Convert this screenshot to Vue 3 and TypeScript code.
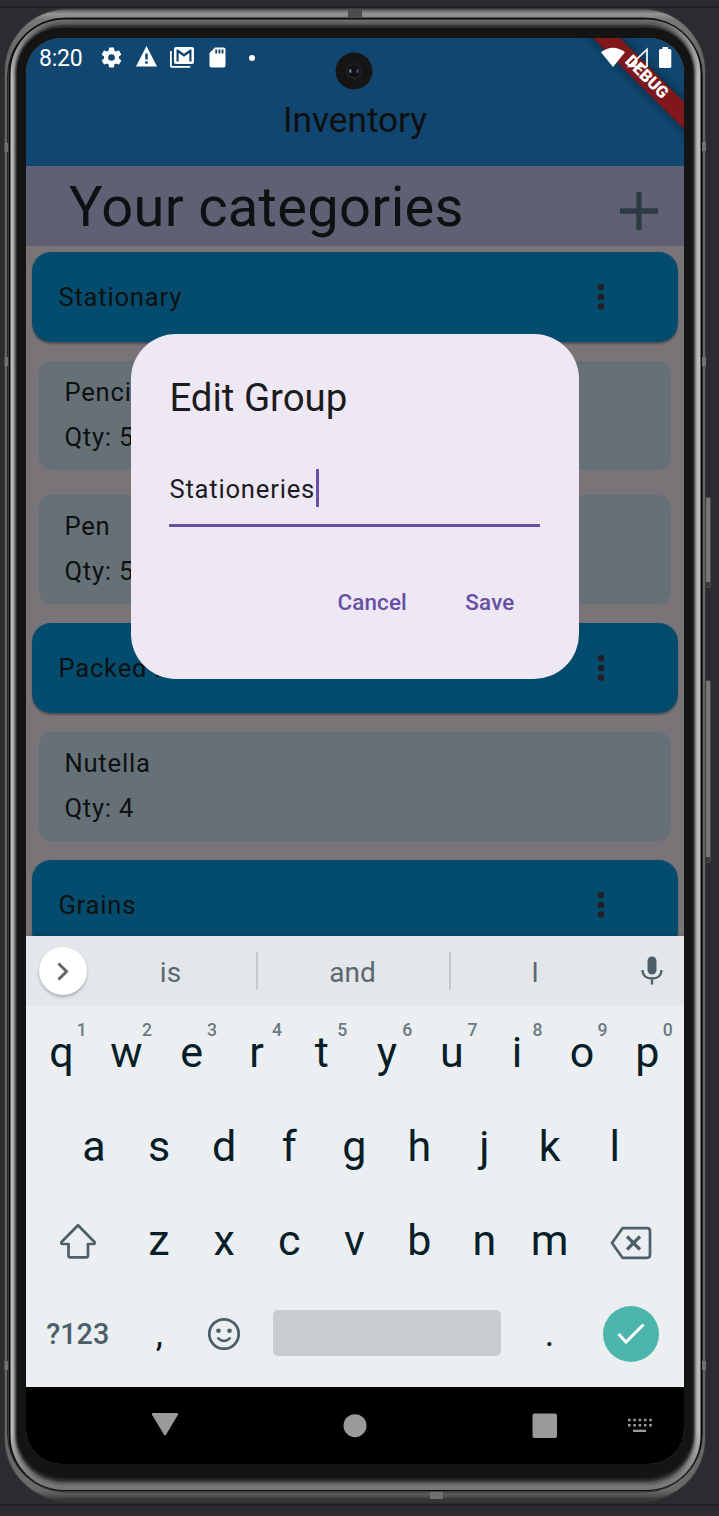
<script setup lang="ts">
interface Item { name: string; qty: number }
interface Group { name: string; items: Item[] }

const groups: Group[] = [
  { name: 'Stationary', items: [{ name: 'Pencil', qty: 5 }, { name: 'Pen', qty: 5 }] },
  { name: 'Packed Foods', items: [{ name: 'Nutella', qty: 4 }] },
  { name: 'Grains', items: [] },
]

const topRow = 'qwertyuiop'.split('').map((key, i) => ({ key, hint: (i + 1) % 10 }))
const homeRow = 'asdfghjkl'.split('')
const bottomRow = 'zxcvbnm'.split('')
</script>

<template>
  <div class="stage">
    <svg class="frame" width="719" height="1516" viewBox="0 0 719 1516">
      <defs>
        <linearGradient id="shell" x1="0" y1="0" x2="0" y2="1">
          <stop offset="0" stop-color="#5a5a5a" />
          <stop offset="0.003" stop-color="#969696" />
          <stop offset="0.007" stop-color="#777" />
          <stop offset="0.03" stop-color="#666" />
          <stop offset="0.97" stop-color="#666" />
          <stop offset="0.993" stop-color="#6a6a6a" />
          <stop offset="0.997" stop-color="#505050" />
          <stop offset="1" stop-color="#2c2c2c" />
        </linearGradient>
        <linearGradient id="rim" x1="0" y1="0" x2="0" y2="1">
          <stop offset="0" stop-color="#6c6c6c" />
          <stop offset="0.012" stop-color="#8c8c8c" />
          <stop offset="0.04" stop-color="#bdbdbd" />
          <stop offset="0.96" stop-color="#bdbdbd" />
          <stop offset="0.99" stop-color="#7c7c7c" />
          <stop offset="1" stop-color="#777" />
        </linearGradient>
        <filter id="soft" x="-5%" y="-5%" width="110%" height="110%">
          <feGaussianBlur stdDeviation="1.6 2.6" />
        </filter>
      </defs>
      <rect y="6" width="719" height="2" fill="#1f2023" />
      <rect y="1504" width="719" height="2" fill="#1f2023" />
      <g fill="#777774" stroke="#4b4b4b">
        <rect x="704.5" y="497.500" width="6" height="90" rx="1.500" />
        <rect x="704.5" y="680.500" width="6" height="182" rx="1.500" />
      </g>
      <g fill="#3a3a3a">
        <rect x="705" y="582" width="5" height="5" />
        <rect x="705" y="857" width="5" height="5" />
      </g>
      <rect x="4" y="8" width="702" height="1494" rx="64" fill="#3a3a3a" />
      <rect x="5" y="9.500" width="700" height="1491" rx="62" fill="url(#shell)" />
      <rect x="7.500" y="18" width="695" height="1474" rx="58" fill="none" stroke="#262626" />
      <g fill="#707070">
        <rect x="4.500" y="143" width="4" height="9" />
        <rect x="4.500" y="357" width="4" height="9" />
        <rect x="4.500" y="1361" width="4" height="9" />
        <rect x="702" y="142" width="4" height="9" />
        <rect x="702" y="357" width="4" height="9" />
        <rect x="702" y="1361" width="4" height="9" />
        <rect x="430" y="1492" width="13" height="7" />
      </g>
      <rect x="348" y="10" width="14" height="7.500" fill="#4c4c4c" />
      <rect x="8.500" y="18" width="693.500" height="1473" rx="56" fill="#0c0c0c" />
      <rect x="10.500" y="19.500" width="690" height="1470.500" rx="54" fill="url(#rim)" />
      <rect x="15" y="25" width="680" height="1457" rx="48" fill="#141414" filter="url(#soft)" />
      <rect x="17" y="28" width="676" height="1448" rx="44" fill="#141414" />
    </svg>

    <div class="screen">
      <header class="appbar">
        <div class="statusbar">
          <span class="clock">8:20</span>
          <svg class="gear" width="25" height="25" viewBox="0 0 24 24"><path fill="#fff" d="M19.140 12.940c.040-.300.060-.610.060-.940 0-.320-.020-.640-.070-.940l2.030-1.580c.180-.140.230-.410.120-.610l-1.920-3.320c-.120-.220-.370-.290-.590-.220l-2.390.960c-.500-.380-1.030-.700-1.620-.940l-.360-2.540c-.040-.240-.240-.410-.480-.410h-3.840c-.240 0-.430.170-.470.410l-.360 2.540c-.590.240-1.130.570-1.620.940l-2.390-.960c-.220-.080-.470 0-.590.220L2.740 8.870c-.120.210-.080.470.120.610l2.030 1.580c-.050.300-.090.630-.090.940s.020.640.070.940l-2.030 1.580c-.180.140-.230.410-.120.610l1.920 3.320c.120.220.370.290.590.220l2.390-.960c.500.380 1.030.700 1.620.940l.360 2.540c.050.240.240.410.480.410h3.840c.240 0 .440-.170.470-.410l.360-2.540c.590-.240 1.130-.560 1.620-.940l2.390.960c.220.080.470 0 .590-.220l1.920-3.320c.120-.220.070-.470-.120-.610l-2.010-1.580zM12 15.200a3.200 3.200 0 1 1 0-6.400 3.200 3.200 0 0 1 0 6.400z" /></svg>
          <svg class="warn" width="23" height="25" viewBox="0 0 24 24" preserveAspectRatio="none"><path fill="#fff" d="M1 21.500h22L12 2zM13.300 19h-2.600v-2.500h2.600zm0-4.200h-2.600V9.200h2.600z" /></svg>
          <svg class="mail" width="24" height="22" viewBox="0 0 24 22"><path fill="#fff" d="M0 4h1.800v15h18.500v1.800H1.800Q0 20.800 0 19z" /><path fill="#fff" fill-rule="evenodd" d="M6 0h16q2 0 2 2v13q0 2-2 2H6q-2 0-2-2V2q0-2 2-2zM6.500 14.500h2.200V6L14 9.800 19.300 6v8.500h2.200V2.500H20L14 6.800 8 2.500H6.500z" /></svg>
          <svg class="card" width="17" height="21" viewBox="0 0 17 21"><path fill="#fff" fill-rule="evenodd" d="M6 .5h8.500q2 0 2 2v16q0 2-2 2h-12q-2 0-2-2V6zM6.300 2.500v4h1.900v-4zm3.200 0v4h1.900v-4zm3.100 0v4h1.900v-4z" /></svg>
          <i class="more" />
        </div>
        <svg class="camera" width="38" height="38" viewBox="0 0 38 38"><circle cx="19" cy="19" r="18.500" fill="#151515" /><circle cx="19" cy="19" r="8.500" fill="#1d1d1f" /><circle cx="19" cy="19" r="6" fill="#101015" /><ellipse cx="15.300" cy="19" rx="1.300" ry="2" fill="#5f8194" /><ellipse cx="22.700" cy="19" rx="1.300" ry="2" fill="#474a89" /></svg>
        <div class="banner">DEBUG</div>
        <svg class="signals" width="74" height="22" viewBox="0 0 74 22"><path fill="#fff" d="M0 5.300Q12 -3.800 24 5.300L12 20z" /><path fill="none" stroke="#fff" stroke-width="1.700" d="M46 2.500v17H28z" /><rect x="58" y="2" width="12.300" height="19" rx="1.500" fill="#fff" /><rect x="61.500" y="0" width="5.500" height="3" fill="#fff" /></svg>
        <h1>Inventory</h1>
      </header>

      <div class="heading">
        <h2>Your categories</h2>
        <svg width="38" height="38" viewBox="0 0 38 38"><path d="M19 0v38M0 19h38" fill="none" stroke="#2c3a41" stroke-width="5.300" /></svg>
      </div>

      <main class="list">
        <section v-for="group in groups" :key="group.name" class="group">
          <div class="group-card">
            <span>{{ group.name }}</span>
            <svg width="8" height="28" viewBox="0 0 8 28" fill="#202024"><circle cx="4" cy="4.300" r="3.300" /><circle cx="4" cy="14" r="3.300" /><circle cx="4" cy="23.600" r="3.300" /></svg>
          </div>
          <div v-for="item in group.items" :key="item.name" class="item">
            <span>{{ item.name }}</span>
            <span>Qty: {{ item.qty }}</span>
          </div>
        </section>
      </main>

      <div class="dialog">
        <h3>Edit Group</h3>
        <div class="field"><span>Stationeries</span><i class="caret" /></div>
        <div class="actions"><button>Cancel</button><button>Save</button></div>
      </div>

      <div class="keyboard">
        <div class="suggestions">
          <span class="expand"><svg width="12" height="19" viewBox="0 0 12 19"><path d="M1.500 1.500l8 8-8 8" fill="none" stroke="#666" stroke-width="3" /></svg></span>
          <span class="word first">is</span>
          <span class="word">and</span>
          <span class="word last">I</span>
          <svg class="mic" width="22" height="29" viewBox="0 0 22 29"><rect x="6.500" y="0.500" width="9" height="18" rx="4.500" fill="#4d5f68" /><path d="M1.500 14c0 5.500 4 8.500 9.500 8.500s9.500-3 9.500-8.500M11 22v6.500" fill="none" stroke="#4d5f68" stroke-width="2.300" /></svg>
        </div>
        <div class="keys">
          <div class="row">
            <span v-for="k in topRow" :key="k.key" class="key">{{ k.key }}<sup>{{ k.hint }}</sup></span>
          </div>
          <div class="row">
            <span v-for="k in homeRow" :key="k" class="key">{{ k }}</span>
          </div>
          <div class="row">
            <span class="key wide shift"><svg width="38" height="37" viewBox="0 0 38 37"><path d="M19 2.200L35.500 19q.800 1.800-1 2H29v11.500q0 1.800-1.800 1.800H11.300q-1.800 0-1.800-1.800V21H3.500q-1.800-.200-1-2z" fill="none" stroke="#4d5f68" stroke-width="2.700" stroke-linejoin="round" /></svg></span>
            <span v-for="k in bottomRow" :key="k" class="key">{{ k }}</span>
            <span class="key wide erase"><svg width="42" height="34" viewBox="0 0 42 34"><path d="M12.500 2.200H37q3 0 3 3v23.600q0 3-3 3H12.500L2 17z" fill="none" stroke="#4d5f68" stroke-width="2.700" stroke-linejoin="round" /><path d="M17 10.500l13 13M30 10.500l-13 13" stroke="#4d5f68" stroke-width="3.200" /></svg></span>
          </div>
          <div class="row">
            <span class="key wide symbols">?123</span>
            <span class="key punct">,</span>
            <span class="key"><svg width="34" height="34" viewBox="0 0 34 34"><circle cx="17" cy="17" r="14.700" fill="none" stroke="#4d5f68" stroke-width="2.800" /><circle cx="11.500" cy="13.800" r="2.300" fill="#4d5f68" /><circle cx="22.500" cy="13.800" r="2.300" fill="#4d5f68" /><path d="M10.500 20.500q6.500 7 13 0" fill="none" stroke="#4d5f68" stroke-width="2.500" /></svg></span>
            <span class="space" />
            <span class="key punct">.</span>
            <span class="key wide"><span class="enter"><svg width="30" height="24" viewBox="0 0 30 24"><path d="M2.500 12l7.500 8L27.500 2.500" fill="none" stroke="#fff" stroke-width="3" /></svg></span></span>
          </div>
        </div>
      </div>

      <nav class="navbar">
        <svg width="658" height="77" viewBox="0 0 658 77" fill="#9a9a9a">
          <path d="M127 26h24q1.800 0 1 1.800l-12 20q-1 1.400-2 0l-12-20q-.800-1.800 1-1.800z" />
          <circle cx="329" cy="38.700" r="11.500" />
          <rect x="506.500" y="26.500" width="24.500" height="24.500" rx="2" />
          <path d="M602 33h24M602 38.300h24" fill="none" stroke="#9a9a9a" stroke-width="2.600" stroke-dasharray="2.600 2.700" />
          <rect x="607" y="42.700" width="13" height="2.300" />
        </svg>
      </nav>
    </div>
  </div>
</template>

<style>
body { margin: 0; background: #2b2c30; }
</style>

<style scoped>
.stage {
  display: grid;
  width: 719px;
  height: 1516px;
  overflow: hidden;
  background: #2b2c30;
  font-family: Roboto, "Liberation Sans", sans-serif;
}
.frame, .screen { grid-area: 1 / 1; }
.screen {
  position: relative;
  display: flex;
  flex-direction: column;
  box-sizing: border-box;
  width: 658px;
  height: 1426px;
  margin: 38px 0 0 26px;
  border-radius: 35px;
  overflow: hidden;
  background: #787477;
  color: #0f1011;
}
h1, h2, h3 { margin: 0; font-weight: 400; }
svg { display: block; flex: none; }
.appbar {
  position: relative;
  flex: none;
  height: 128px;
  overflow: hidden;
  background: #10466f;
}
.statusbar {
  display: flex;
  align-items: center;
  height: 39px;
  padding-left: 13px;
  color: #fff;
}
.clock { width: 44px; padding-top: 1px; font-size: 23px; letter-spacing: -.2px; }
.gear { margin-left: 16px; }
.warn { margin: 0 0 2px 11px; }
.mail { margin-left: 12px; }
.card { margin-left: 15px; }
.more { width: 6px; height: 6px; margin-left: 23px; border-radius: 50%; background: #fff; }
.camera { position: absolute; left: 309px; top: 14px; }
.signals { position: absolute; left: 575px; top: 9px; }
.banner {
  position: absolute;
  left: 519px;
  top: 28.800px;
  width: 200px;
  height: 19.200px;
  box-sizing: border-box;
  padding-left: 3px;
  transform: rotate(45deg);
  background: #80181b;
  box-shadow: 0 0 10px rgba(0, 0, 0, .5);
  color: #fff;
  font-size: 16.600px;
  font-weight: 900;
  line-height: 18px;
  text-align: center;
}
.appbar h1 { margin-top: 21px; font-size: 35.200px; line-height: 45px; text-align: center; }
.heading {
  display: flex;
  flex: none;
  align-items: center;
  justify-content: space-between;
  height: 80px;
  padding: 0 26px 0 43px;
  box-sizing: border-box;
  background: #5f6074;
}
.heading h2 { padding-top: 1px; font-size: 56px; letter-spacing: .33px; }
.heading svg { margin-top: 9px; }
.list {
  flex: 1;
  min-height: 0;
  padding: 6px 6.400px 0;
  overflow: hidden;
  font-size: 25.600px;
  letter-spacing: .8px;
}
.group-card {
  display: flex;
  align-items: center;
  justify-content: space-between;
  box-sizing: border-box;
  height: 89.600px;
  padding: 0 73px 0 26px;
  border-radius: 19.200px;
  background: #044c6e;
  box-shadow: 0 1.600px 2px rgba(0, 0, 0, .3);
}
.item {
  display: flex;
  flex-direction: column;
  gap: 6.400px;
  box-sizing: border-box;
  height: 108.800px;
  margin: 19.200px 6.400px 25.600px;
  padding: 12.200px 25.600px;
  border-radius: 12.800px;
  background: #667177;
  line-height: 38.400px;
}
.item:last-child { margin-bottom: 19.200px; }
.item + .item { margin-top: 0; }
.dialog {
  position: absolute;
  left: 105px;
  top: 295.500px;
  width: 448px;
  height: 345.500px;
  box-sizing: border-box;
  padding: 38.400px;
  border-radius: 45px;
  background: #eee8f4;
  color: #1c1b20;
}
.dialog h3 { font-size: 38.400px; line-height: 51.200px; }
.field {
  display: flex;
  align-items: center;
  height: 74px;
  margin-top: 30px;
  padding-bottom: 2px;
  border-bottom: 3px solid #6750a4;
  width: 371px;
  box-sizing: border-box;
  font-size: 25.600px;
  letter-spacing: .8px;
}
.field span { padding-top: 3px; }
.caret { width: 3px; height: 38px; margin-left: 1px; background: #6750a4; }
.actions { display: flex; justify-content: flex-end; gap: 20px; margin-top: 36px; padding-right: 7px; }
button {
  height: 77px;
  padding: 0 19.200px;
  border: 0;
  background: none;
  color: #6750a4;
  font: 500 22.400px Roboto, "Liberation Sans", sans-serif;
  letter-spacing: .16px;
}
.keyboard {
  flex: none;
  height: 451px;
  background: #ebeff2;
  box-shadow: 0 -1px 4px rgba(0, 0, 0, .15);
  color: #071e28;
}
.suggestions {
  display: flex;
  align-items: center;
  height: 70px;
  padding: 0 21px 0 13px;
  box-sizing: border-box;
  background: #e3e7ea;
  color: #5a6970;
  font-size: 28px;
}
.expand {
  display: flex;
  align-items: center;
  justify-content: center;
  width: 48px;
  height: 48px;
  border-radius: 50%;
  background: #fff;
  box-shadow: 0 2px 3px rgba(0, 0, 0, .25);
}
.word {
  flex: none;
  box-sizing: border-box;
  width: 193px;
  height: 38px;
  padding-right: 2px;
  border-right: 2px solid #c4c9cc;
  line-height: 41px;
  text-align: center;
}
.word.first { width: 171px; }
.word.last { width: 170px; border: 0; }
.mic { margin: 0 0 2px auto; }
.keys { margin: -1px 1.400px 0 0; }
.row { display: flex; justify-content: center; height: 94px; }
.key {
  position: relative;
  display: flex;
  align-items: center;
  justify-content: center;
  width: 65.100px;
  font-size: 43px;
}
.key.wide { width: 97.700px; }
.shift { padding-top: 2px; box-sizing: border-box; }
.erase { padding-top: 5px; box-sizing: border-box; }
.key sup {
  position: absolute;
  left: 48px;
  top: 14.500px;
  color: #6c7a80;
  font-size: 17.600px;
  font-weight: 500;
  line-height: 20px;
}
.key.symbols { color: #4d5f68; font-size: 28.800px; font-weight: 500; }
.key.punct { font-size: 36px; }
.space {
  align-self: center;
  width: 228px;
  height: 46px;
  margin: 0 16px 2px;
  border-radius: 5px;
  background: #c9cdd0;
}
.enter {
  display: flex;
  align-items: center;
  justify-content: center;
  width: 56px;
  height: 56px;
  border-radius: 50%;
  background: #4db6ac;
}
.navbar { flex: none; height: 77px; background: #000; }
</style>
